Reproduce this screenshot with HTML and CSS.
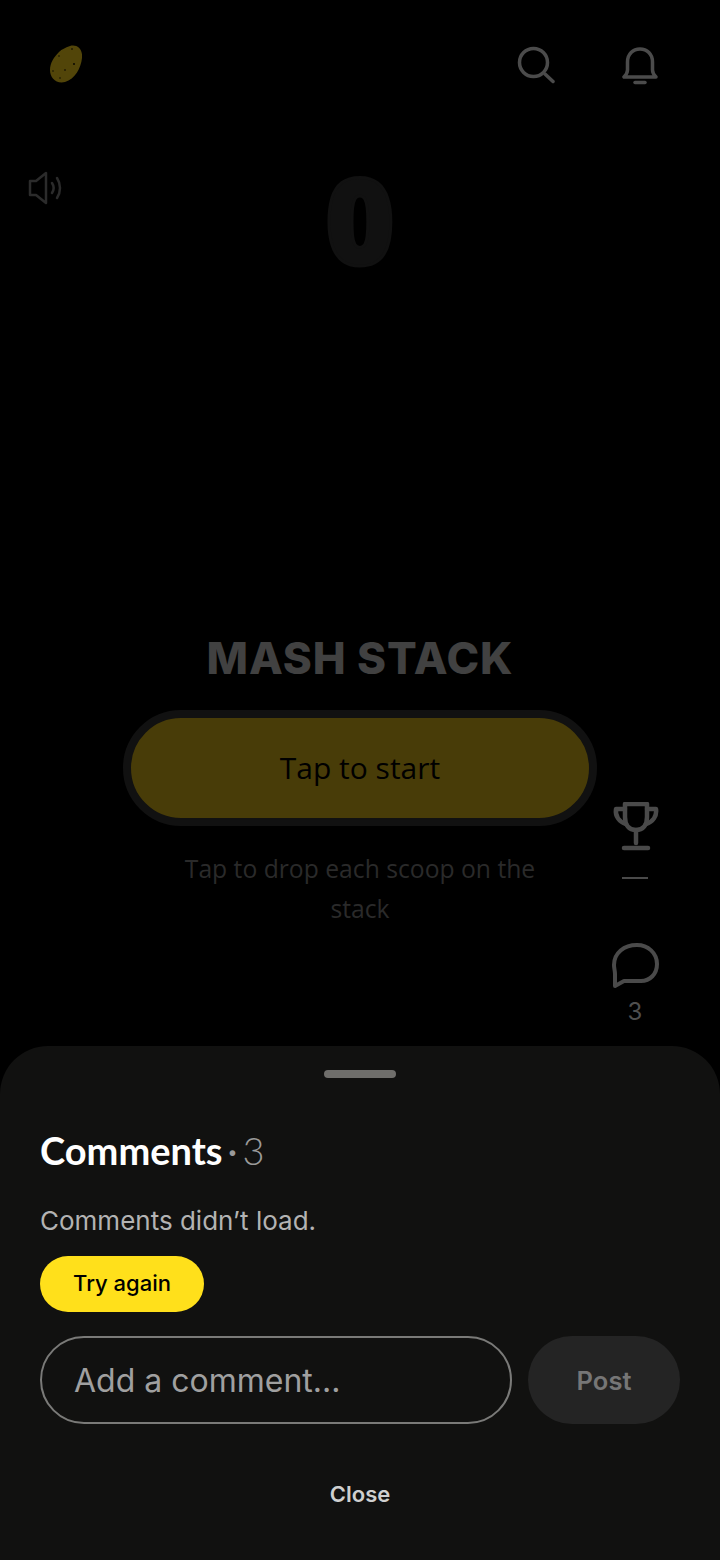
FILE: index.html
```html
<!DOCTYPE html>
<html lang="en">

<head>
    <meta charset="UTF-8">
    <meta name="viewport" content="width=device-width, initial-scale=1.0">
    <title>Mash Stack</title>
    <link rel="stylesheet" href="styles.css">
</head>

<body>
    <div class="screen">
        <div class="game">
            <div class="topbar">
                <svg class="potato" width="32" height="38" viewBox="0 0 32 38">
                    <path d="M20 1C27 -1 33 4 32 13C31 23 25 34 15 37C6 39 0 33 0 25C0 18 4 12 9 7C12 4 15 3 20 1Z" fill="#524509"/>
                    <g fill="#000">
                        <circle cx="22" cy="4" r=".8"/>
                        <circle cx="9" cy="11" r=".7"/>
                        <circle cx="24" cy="19" r=".9"/>
                        <circle cx="15" cy="25" r=".8"/>
                        <circle cx="3" cy="26" r=".7"/>
                        <circle cx="10" cy="33" r=".7"/>
                    </g>
                </svg>
                <div class="topbar-icons">
                    <svg width="38" height="40" viewBox="0 0 38 40" fill="none" stroke="#4b4b4b" stroke-width="3.500" stroke-linecap="round">
                        <circle cx="16.500" cy="17.500" r="14"/>
                        <path d="M28 29L36 36.500"/>
                    </svg>
                    <svg width="36" height="40" viewBox="0 0 36 40" fill="none" stroke="#4b4b4b" stroke-width="3.500" stroke-linecap="round" stroke-linejoin="round">
                        <path d="M2 32H34C32 30 30.500 28 30.500 25V17C30.500 9 25 4 18 4C11 4 5.500 9 5.500 17V25C5.500 28 4 30 2 32Z"/>
                        <path d="M13 37.500H23"/>
                    </svg>
                </div>
            </div>

            <div class="score-row">
                <svg class="sound" width="36" height="34" viewBox="0 0 36 34" fill="none" stroke="#2b2b2b" stroke-width="2.500" stroke-linejoin="round" stroke-linecap="round">
                    <path d="M2 10H8L18 2V32L8 24H2Z"/>
                    <path d="M24 12C26 15 26 19 24 22"/>
                    <path d="M29 7C33 13 33 21 29 27"/>
                </svg>
                <div class="score">0</div>
            </div>

            <div class="intro">
                <h1 class="title">MASH STACK</h1>
                <button class="start-btn">Tap to start</button>
                <p class="hint">Tap to drop each scoop on the stack</p>
            </div>

            <div class="rail">
                <div class="rail-item">
                    <svg width="48" height="50" viewBox="-1 1 48 50" fill="none" stroke="#4a4a4a" stroke-width="4.500" stroke-linecap="round" stroke-linejoin="round">
                        <path d="M13 3H35V16C35 24 31 29 24 29C17 29 13 24 13 16Z"/>
                        <path d="M13 8H4C3 15 7 21 14 23"/>
                        <path d="M35 8H44C45 15 41 21 34 23"/>
                        <path d="M24 29V42"/>
                        <path d="M12 47H36"/>
                    </svg>
                    <span class="rail-dash"></span>
                </div>
                <div class="rail-item">
                    <svg width="48" height="46" viewBox="0 0 48 46" fill="none" stroke="#4a4a4a" stroke-width="4" stroke-linecap="round" stroke-linejoin="round">
                        <path d="M4 43L13 38H30C39 38 46 31 46 21C46 10 37 2 26 2C13 2 3 10 3 22C3 25 4 28 4 31Z"/>
                    </svg>
                    <span class="rail-count">3</span>
                </div>
            </div>
        </div>

        <div class="sheet">
            <div class="handle"></div>
            <h2 class="sheet-title">Comments<span class="sheet-dot">·</span><span class="sheet-count">3</span></h2>
            <p class="error-text">Comments didn’t load.</p>
            <button class="retry-btn">Try again</button>
            <div class="comment-form">
                <div class="comment-input">Add a comment...</div>
                <button class="post-btn">Post</button>
            </div>
            <button class="close-btn">Close</button>
        </div>
    </div>
</body>

</html>
```

FILE: styles.css
```css
* {
    box-sizing: border-box;
}

body {
    margin: 0;
    background: #000;
    font-family: Inter, sans-serif;
}

button {
    border: none;
    font-family: inherit;
    padding: 0;
}

.screen {
    width: 720px;
    height: 1560px;
    overflow: hidden;
}

.game {
    position: relative;
    height: 1046px;
}

.topbar {
    display: flex;
    justify-content: space-between;
    padding: 45px 62px 0 50px;
    height: 171px;
}

.topbar-icons {
    display: flex;
    gap: 67px;
    height: 40px;
}

.score-row {
    display: grid;
    grid-template-columns: 1fr auto 1fr;
    padding-left: 28px;
    padding-right: 28px;
    height: 462px;
}

.sound {
    grid-column: 1;
    grid-row: 1;
}

.score {
    grid-column: 2;
    grid-row: 1;
    font-family: "Open Sans", sans-serif;
    font-weight: 800;
    font-size: 120px;
    line-height: 96px;
    color: #111;
    -webkit-text-stroke: 3px #111;
}

.intro {
    display: flex;
    flex-direction: column;
    align-items: center;
}

.title {
    margin: 0 0 27px;
    font-family: Inter, sans-serif;
    font-weight: 800;
    font-size: 44px;
    line-height: 50px;
    color: #414141;
    letter-spacing: .9px;
}

.start-btn {
    width: 474px;
    height: 116px;
    padding-bottom: 2px;
    border: 8px solid #111;
    border-radius: 58px;
    background: #483c08;
    color: #000;
    font-family: "Open Sans", sans-serif;
    font-size: 30px;
    font-weight: 500;
}

.hint {
    width: 400px;
    margin: 23px 0 0;
    text-align: center;
    font-family: "Open Sans", sans-serif;
    font-size: 24.700px;
    line-height: 40px;
    color: #2a2a2a;
}

.rail {
    position: absolute;
    top: 802px;
    left: 611px;
    width: 48px;
    display: flex;
    flex-direction: column;
    gap: 64px;
}

.rail-item {
    display: flex;
    flex-direction: column;
    align-items: center;
}

.rail-dash {
    width: 26px;
    height: 2px;
    margin-top: 25px;
    background: #4a4a4a;
}

.rail-count {
    margin-top: 8px;
    font-size: 24px;
    line-height: 30px;
    color: #4f4f4f;
}

.sheet {
    height: 514px;
    padding: 24px 40px 0;
    background: #111110;
    border-radius: 48px 48px 0 0;
}

.handle {
    width: 72px;
    height: 8px;
    margin: 0 auto;
    border-radius: 4px;
    background: #6f6e6b;
}

.sheet-title {
    margin: 50px 0 0;
    font-family: Lato, sans-serif;
    font-weight: 700;
    font-size: 38px;
    line-height: 44px;
    color: #fff;
}

.sheet-dot {
    margin: 0 5px;
    font-weight: 400;
    color: #9a9a9a;
}

.sheet-count {
    font-weight: 300;
    color: #9a9a9a;
}

.error-text {
    margin: 31px 0 0;
    font-size: 26px;
    line-height: 36px;
    color: #b3b3b3;
}

.retry-btn {
    display: block;
    width: 164px;
    height: 56px;
    margin-top: 17px;
    padding-bottom: 3px;
    border-radius: 28px;
    background: #ffe01b;
    color: #000;
    font-size: 22px;
    font-weight: 500;
}

.comment-form {
    display: flex;
    gap: 16px;
    margin-top: 24px;
}

.comment-input {
    flex: 1;
    height: 88px;
    padding-left: 32px;
    border: 2px solid #7a7a78;
    border-radius: 44px;
    font-size: 32px;
    line-height: 86px;
    color: #a0a0a0;
}

.post-btn {
    width: 152px;
    height: 88px;
    border-radius: 44px;
    background: #242424;
    color: #767676;
    font-size: 25.500px;
    font-weight: 600;
}

.close-btn {
    display: block;
    margin: 56px auto 0;
    background: none;
    color: #cfcfcf;
    font-size: 22px;
    line-height: 28px;
    font-weight: 600;
}
```
